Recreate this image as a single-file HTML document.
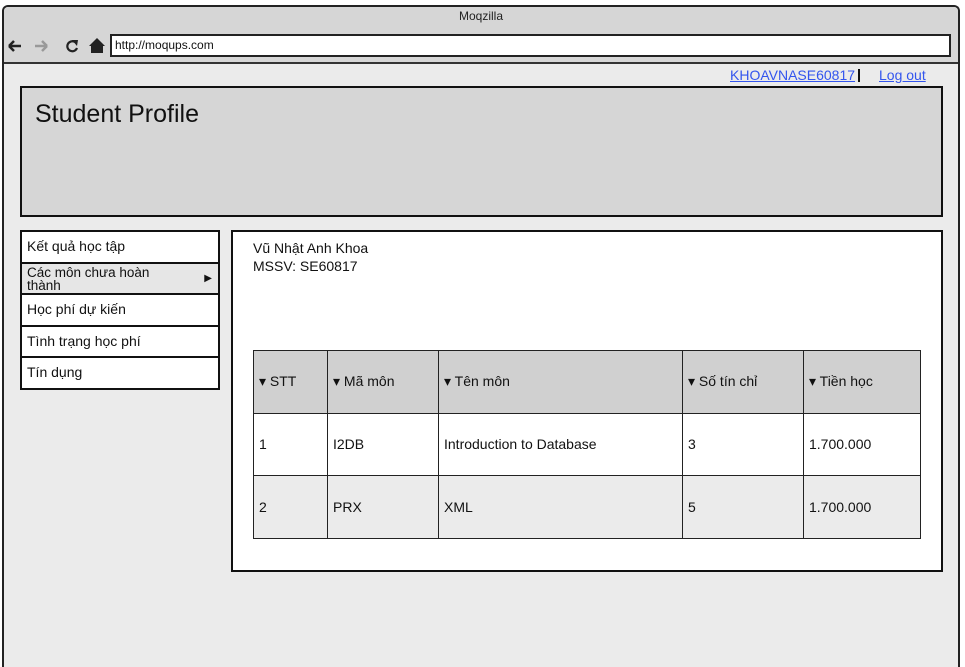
<!DOCTYPE html>
<html><head><meta charset="utf-8"><style>
*{box-sizing:border-box;margin:0;padding:0}
html,body{width:965px;height:667px;overflow:hidden}
body{background:#fff;font-family:"Liberation Sans",Arial,sans-serif;color:#111;position:relative}
.frame{position:absolute;left:2px;top:5px;width:958px;height:662px;border:2px solid #222;border-bottom:none;border-radius:6px 6px 0 0;background:#ebebeb;overflow:hidden}
.bar{position:absolute;left:0;top:0;width:100%;height:57px;background:#d6d6d6;border-bottom:2px solid #333}
.title{position:absolute;top:2px;width:100%;text-align:center;font-size:12px;color:#222}
.url{position:absolute;left:106px;top:27px;width:841px;height:23px;border:2px solid #222;background:#fff;font-size:12px;padding:2px 3px}
.abs{position:absolute}
a{color:#3355ee;text-decoration:underline}
.hdr{left:16px;top:79px;width:923px;height:131px;background:#d6d6d6;border:2px solid #111}
.hdr span{position:absolute;left:13px;top:12px;font-size:25px}
.menu{left:16px;top:223px;width:200px;height:160px;border:2px solid #111;background:#fff}
.mi{height:31.5px;border-bottom:2px solid #111;font-size:14px;padding:6px 5px;position:relative}
.mi:last-child{border-bottom:none}
.main{left:227px;top:223px;width:712px;height:342px;border:2px solid #111;background:#fff}
table{position:absolute;left:20px;top:118px;width:668px;border-collapse:collapse;font-size:14px}
td{border:1px solid #222;height:62.5px;padding-left:5px}
tr.h td{background:#d0d0d0}
tr.g td{background:#ebebeb}
</style></head><body>
<div class="frame">
<div class="bar">
<div class="title">Moqzilla</div>
<svg class="abs" style="left:3px;top:30px" width="100" height="18">
<path d="M2 9H14M2 9L7 4M2 9L7 14" stroke="#222" stroke-width="2.5" fill="none"/>
<path d="M28 9H40M40 9L35 4M40 9L35 14" stroke="#999" stroke-width="2.5" fill="none"/>
<path d="M68 5A5 5 0 1 0 70 11" stroke="#222" stroke-width="2.2" fill="none"/><path d="M65 3L71 3L70 9Z" fill="#222"/>
<path d="M82 9L90 1L98 9H96V16H84V9Z" fill="#222"/>
</svg>
<div class="url">http://moqups.com</div>
</div>
<div class="abs" style="left:726px;top:60px;font-size:14px"><a>KHOAVNASE60817</a></div>
<div class="abs" style="left:854px;top:62px;width:2px;height:13px;background:#111"></div>
<div class="abs" style="left:875px;top:60px;font-size:14px"><a>Log out</a></div>
<div class="abs hdr"><span>Student Profile</span></div>
<div class="abs menu">
<div class="mi">Kết quả học tập</div>
<div class="mi" style="background:#e6e6e6;font-size:13.5px;line-height:13px;padding:2px 5px">Các môn chưa hoàn<br>thành<span style="position:absolute;right:6px;top:8px;font-size:10px">▶</span></div>
<div class="mi">Học phí dự kiến</div>
<div class="mi">Tình trạng học phí</div>
<div class="mi">Tín dụng</div>
</div>
<div class="abs main">
<div class="abs" style="left:20px;top:7px;font-size:14px;line-height:18px">Vũ Nhật Anh Khoa<br>MSSV: SE60817</div>
<table>
<tr class="h"><td style="width:74px">▾ STT</td><td style="width:111px">▾ Mã môn</td><td style="width:244px">▾ Tên môn</td><td style="width:121px">▾ Số tín chỉ</td><td>▾ Tiền học</td></tr>
<tr><td>1</td><td>I2DB</td><td>Introduction to Database</td><td>3</td><td>1.700.000</td></tr>
<tr class="g"><td>2</td><td>PRX</td><td>XML</td><td>5</td><td>1.700.000</td></tr>
</table>
</div>
</div>
</body></html>
